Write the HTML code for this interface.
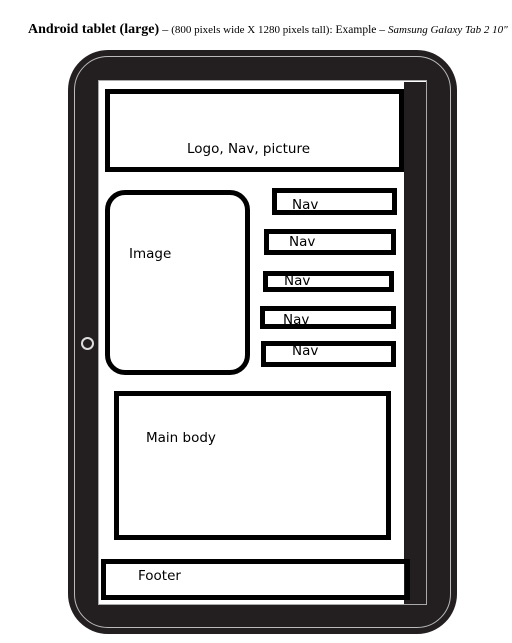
<!DOCTYPE html>
<html><head><meta charset="utf-8"><style>
body{margin:0;width:512px;height:643px;background:#fff;position:relative;overflow:hidden;font-family:"Liberation Sans",sans-serif}
.a{position:absolute;box-sizing:border-box}
.b{border:5px solid #000}
.t{position:absolute;font-size:13.5px;color:#000;font-family:"DejaVu Sans","Liberation Sans",sans-serif}
</style></head><body>
<div class="t" style="left:28px;top:22px;font-family:'Liberation Serif',serif;font-size:12px;white-space:nowrap"><b style="font-size:14px">Android tablet (large)</b> – <span style="font-size:11px">(800 pixels wide X 1280 pixels tall):</span> <span style="font-size:11.5px">Example –</span> <i style="font-size:11px">Samsung Galaxy Tab 2 10"</i></div>
<div class="a" style="left:68px;top:50px;width:389px;height:584px;background:#231f20;border-radius:40px"></div>
<div class="a" style="left:74px;top:56px;width:377px;height:572px;border:1.5px solid #bbb;border-radius:34px"></div>
<div class="a" style="left:98px;top:80px;width:329px;height:525px;background:#fff;box-shadow:inset 0 0 0 1px #aaa"></div>
<div class="a" style="left:404px;top:82px;width:22px;height:522px;background:#231f20"></div>
<div class="a" style="left:81px;top:337px;width:13px;height:13px;border:2px solid #ddd;border-radius:50%"></div>
<div class="a b" style="left:105px;top:89px;width:299px;height:83px"></div>
<div class="t" style="left:187px;top:141px">Logo, Nav, picture</div>
<div class="a b" style="left:105px;top:190px;width:145px;height:185px;border-radius:20px"></div>
<div class="t" style="left:129px;top:246px">Image</div>
<div class="a b" style="left:272px;top:188px;width:125px;height:27px"></div>
<div class="t" style="left:292px;top:197px">Nav</div>
<div class="a b" style="left:264px;top:229px;width:132px;height:26px"></div>
<div class="t" style="left:289px;top:234px">Nav</div>
<div class="a b" style="left:263px;top:271px;width:131px;height:21px"></div>
<div class="t" style="left:284px;top:273px">Nav</div>
<div class="a b" style="left:260px;top:306px;width:136px;height:23px"></div>
<div class="t" style="left:283px;top:312px">Nav</div>
<div class="a b" style="left:261px;top:341px;width:135px;height:26px"></div>
<div class="t" style="left:292px;top:343px">Nav</div>
<div class="a b" style="left:114px;top:391px;width:277px;height:149px"></div>
<div class="t" style="left:146px;top:430px">Main body</div>
<div class="a b" style="left:101px;top:559px;width:309px;height:41px"></div>
<div class="t" style="left:138px;top:568px">Footer</div>
</body></html>
